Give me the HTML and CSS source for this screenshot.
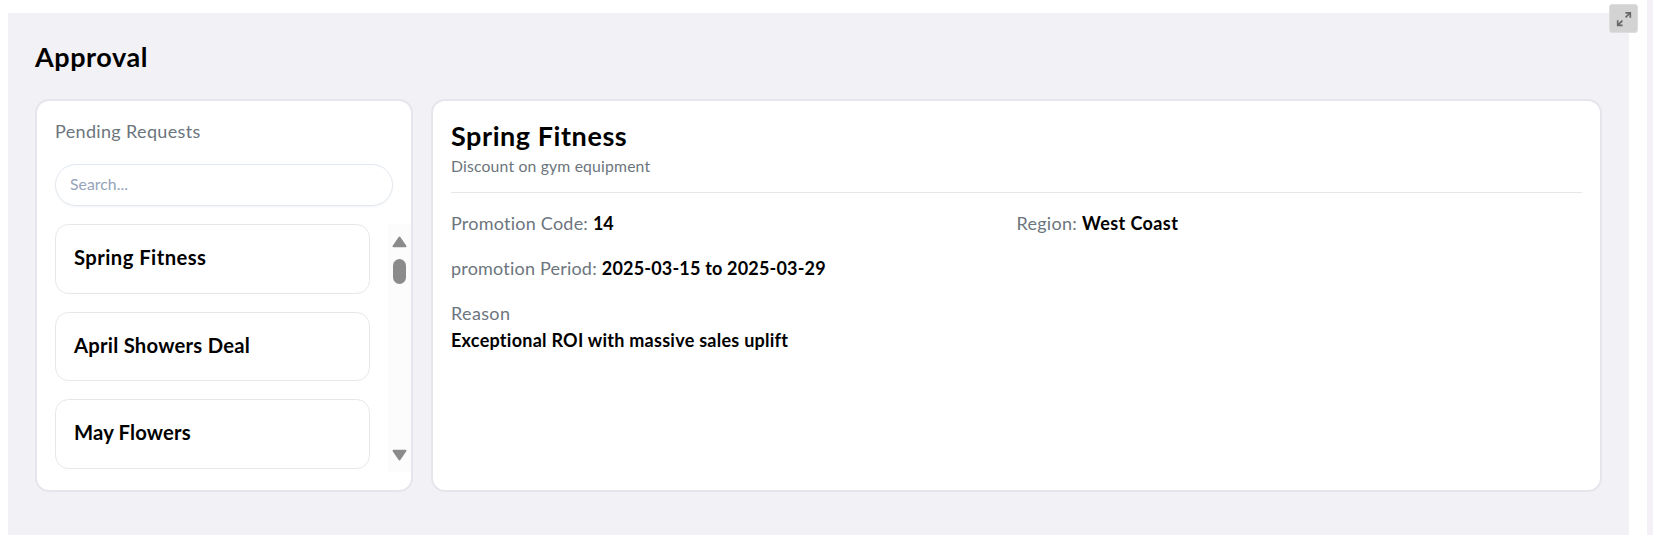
FILE: index.html
```html
<!DOCTYPE html>
<html lang="en">
<head>
<meta charset="utf-8">
<title>Approval</title>
<link rel="stylesheet" href="styles.css">
</head>
<body>
<div class="page">
  <main class="panel">
    <h1 class="panel-title"><span class="t-approval">Approval</span></h1>
    <div class="columns">
      <section class="card requests">
        <div class="requests-label"><span class="t-pending">Pending Requests</span></div>
        <div class="search"><span class="t-search">Search...</span></div>
        <div class="list">
          <div class="items">
            <div class="item"><span class="t-item1">Spring Fitness</span></div>
            <div class="item"><span class="t-item2">April Showers Deal</span></div>
            <div class="item"><span class="t-item3">May Flowers</span></div>
          </div>
          <div class="scrollbar">
            <svg class="arrow" width="15" height="12" viewBox="0 0 15 12"><path d="M7.5 1.6 13.5 10.3H1.5Z"/></svg>
            <div class="thumb"></div>
            <svg class="arrow arrow-down" width="15" height="12" viewBox="0 0 15 12"><path d="M7.5 10.4 1.5 1.7h12Z"/></svg>
          </div>
        </div>
      </section>
      <section class="card detail">
        <h2 class="detail-title"><span class="t-title">Spring Fitness</span></h2>
        <div class="detail-sub"><span class="t-sub">Discount on gym equipment</span></div>
        <div class="fields">
          <div class="field"><span class="label t-code">Promotion Code:</span><strong class="t-codeval">14</strong></div>
          <div class="field"><span class="label t-region">Region:</span><strong class="t-west">West Coast</strong></div>
          <div class="field wide"><span class="label t-period">promotion Period:</span><strong class="t-dates">2025-03-15 to 2025-03-29</strong></div>
          <div class="field wide reason"><span class="label t-reason">Reason</span><strong class="t-roi">Exceptional ROI with massive sales uplift</strong></div>
        </div>
      </section>
    </div>
  </main>
  <div class="edge"></div>
  <div class="expand">
    <svg width="16" height="16" viewBox="0 0 16 16"><path d="M9.6 6.4 14 2M9.4 1.8h4.9v4.9M6.4 9.6 2 14M1.7 9.3v5h4.9"/></svg>
  </div>
</div>
</body>
</html>
```
FILE: styles.css
```css
* { box-sizing: border-box; }
body { margin: 0; background: #fff; color: #000; font: 18px/27px Lato, "Liberation Sans", sans-serif; }
.page { position: relative; display: flex; justify-content: space-between; height: 535px; padding-left: 8px; overflow: hidden; }
.panel { width: 1621px; margin-top: 13px; padding: 27px 27px 0; background: #f2f1f6; }
.panel-title { margin: 0 0 25px; font-size: 27px; line-height: 34px; font-weight: 700; }
.columns { display: grid; grid-template-columns: 378px 1171px; gap: 18px; height: 393px; }
.card { min-width: 0; border: 2px solid #e6e5eb; border-radius: 14px; background: #fff; padding: 18px; }
.requests { padding-right: 0; }
.requests-label { height: 27px; line-height: 25px; color: #6c757d; }
.search { width: 338px; height: 42px; margin-top: 18px; padding: 0 14px; border: 1px solid #e2e8f0; border-radius: 21px; color: #94a3b8; font-size: 15.75px; line-height: 38px; box-shadow: 0 1px 2px rgba(0,0,0,.05); }
.list { display: flex; justify-content: space-between; margin-top: 18.4px; height: 247.6px; }
.items { display: flex; flex-direction: column; gap: 18px; width: 315px; }
.item { height: 69.4px; padding: 0 18px; border: 1px solid #e5e7eb; border-radius: 13.5px; font-size: 20.25px; line-height: 65px; font-weight: 700; }
.scrollbar { display: flex; flex-direction: column; align-items: center; width: 23px; padding: 12px 0 11px; background: #fcfcfc; }
.arrow { display: block; fill: #8b8b8b; stroke: #8b8b8b; stroke-width: 2; stroke-linejoin: round; }
.arrow-down { margin-top: auto; }
.thumb { width: 13px; height: 25px; margin-top: 11px; border-radius: 7px; background: #8b8b8b; }
.detail-title { height: 36px; margin: 0; font-size: 27px; line-height: 34px; font-weight: 700; }
.detail-sub { height: 38px; color: #6c757d; font-size: 15.75px; line-height: 22px; border-bottom: 1px solid #e5e7eb; }
.fields { display: grid; grid-template-columns: 1fr 1fr; row-gap: 18px; padding-top: 18px; }
.field { display: flex; gap: 5px; height: 27px; line-height: 25px; white-space: nowrap; }
.wide { grid-column: span 2; }
.reason { flex-direction: column; gap: 2px; align-items: flex-start; height: 54px; }
.label { color: #6c757d; }
.edge { width: 6px; background: #f5f0f7; }
.expand { position: absolute; left: 1609px; top: 4px; display: grid; place-items: center; width: 29px; height: 29px; border: 1px solid #dedede; border-radius: 3px; background: #d3d3d3; }
.expand svg { fill: none; stroke: #686868; stroke-width: 1.7; }
/* tracking */
.t-approval { letter-spacing: .57px; }
.t-pending { letter-spacing: .34px; }
.t-search { letter-spacing: .05px; }
.t-item1 { letter-spacing: .44px; }
.t-item2 { letter-spacing: .24px; }
.t-item3 { letter-spacing: .16px; }
.t-title { letter-spacing: .56px; }
.t-sub { letter-spacing: .17px; }
.t-code { letter-spacing: .23px; }
.t-region { letter-spacing: .27px; }
.t-west { letter-spacing: .4px; }
.t-period { letter-spacing: .2px; }
.t-codeval { letter-spacing: -.4px; }
.t-dates { letter-spacing: .18px; }
.t-reason { letter-spacing: .35px; }
.t-roi { letter-spacing: .26px; }
```
